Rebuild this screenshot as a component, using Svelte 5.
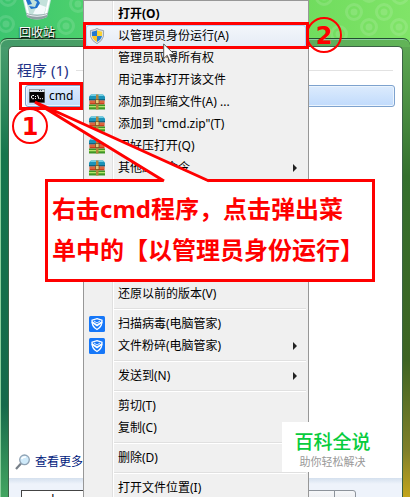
<script>
  const before = [
    { text: '打开(O)', bold: true },
    { text: '以管理员身份运行(A)', icon: 'shield', active: true },
    { text: '管理员取得所有权' },
    { text: '用记事本打开该文件' },
    { text: '添加到压缩文件(A) ...', icon: 'zip' },
    { text: '添加到 "cmd.zip"(T)', icon: 'zip' },
    { text: '用好压打开(Q)', icon: 'zip' },
    { text: '其他压缩命令', icon: 'zip', sub: true }
  ];
  const groups = [
    [{ text: '还原以前的版本(V)' }],
    [
      { text: '扫描病毒(电脑管家)', icon: 'guard' },
      { text: '文件粉碎(电脑管家)', icon: 'guard', sub: true }
    ],
    [{ text: '发送到(N)', sub: true }],
    [{ text: '剪切(T)' }, { text: '复制(C)' }],
    [{ text: '删除(D)' }],
    [{ text: '打开文件位置(I)' }]
  ];
  const rings = [
    [324, -3], [354, 12], [384, 12], [369, 27], [399, 27], [339, 34], [369, -6], [400, -4],
    [6, 24], [66, 26], [78, 4], [8, -2]
  ];
</script>

{#snippet icon(name)}
  {#if name === 'shield'}
    <svg width="16" height="16" viewBox="0 0 16 16">
      <path d="M8 .4 10.2 1.6 14.6 2.6 14.4 8.6Q13.2 13 8 15.7 2.8 13 1.6 8.6L1.4 2.6 5.8 1.6Z" fill="#dfe4e8" stroke="#8a949c" stroke-width=".8" />
      <path d="M8 2.2V8H3L2.8 3.8 6 3Z" fill="#2378d0" />
      <path d="M8 2.2 10 3 13.2 3.8 13 8H8Z" fill="#fbd234" />
      <path d="M3 8H8V14Q4 11.8 3 8Z" fill="#fbc523" />
      <path d="M8 8H13Q12 11.8 8 14Z" fill="#2a7fd6" />
    </svg>
  {:else if name === 'zip'}
    <svg width="16" height="16" viewBox="0 0 16 16">
      <path d="M2 .5H14L16 2.500V5.500H0V2.500Z" fill="#1c93b8" />
      <path d="M2 .5H14L15 2H1Z" fill="#6fcfe4" />
      <path d="M0 5H16V6.500H0Z" fill="#0f6480" />
      <path d="M.5 6.500H15.500V10.500H.5Z" fill="#c8401f" />
      <path d="M.5 7.500H15.500V8.500H.5Z" fill="#f58a5c" />
      <path d="M0 10.500H16V15.500H0Z" fill="#3f9626" />
      <path d="M0 12H16V13.300H0Z" fill="#b4e66c" />
      <path d="M7 .5H9.500V15.500H7Z" fill="#b4853c" />
      <path d="M6.500 5.500H10V9.500H6.500Z" fill="#e9c677" stroke="#6d4518" stroke-width=".7" />
    </svg>
  {:else if name === 'guard'}
    <svg width="16" height="16" viewBox="0 0 16 16">
      <rect width="16" height="16" rx="1.500" fill="#1677f8" />
      <path d="M8 2.600 13 4.200Q13.500 10.500 8 13.500 2.500 10.500 3 4.200Z" fill="none" stroke="#fff" stroke-width="1.300" />
      <path d="M3 6 8 9.500 13 6" fill="none" stroke="#fff" stroke-width="1.800" />
      <path d="M5 5 8 7 11 5" fill="none" stroke="#fff" stroke-width=".9" />
    </svg>
  {/if}
{/snippet}

{#snippet entry(item)}
  <button class="item" class:bold={item.bold} class:active={item.active} role="menuitem">
    <span class="slot">{@render icon(item.icon)}</span>
    <span class="label">{item.text}</span>
    {#if item.sub}
      <svg class="arrow" width="4" height="8" viewBox="0 0 4 8"><path d="M0 0 4 4 0 8Z" fill="#222" /></svg>
    {/if}
  </button>
{/snippet}

<div class="desktop">
  <svg class="wallpaper" width="100%" height="60">
    {#each rings as [x, y]}
      <circle cx={x} cy={y} r="7.500" fill="none" stroke="#fff" stroke-opacity=".12" stroke-width="3" />
      <circle cx={x} cy={y} r="3.500" fill="#fff" fill-opacity=".13" />
    {/each}
  </svg>

  <div class="bin">
    <svg width="30" height="20" viewBox="0 0 30 20">
      <path d="M1 0H29L25 17Q15 22 5 17Z" fill="#d5e4ea" fill-opacity=".88" />
      <path d="M3 0 7 17M27 0 23 17" stroke="#fff" stroke-width="2" />
      <path d="M11 14 16 4 24 7 22 14Z" fill="#f4fafc" />
      <path d="M4.200 13Q15 17 26 13L25 17Q15 22 5 17Z" fill="#8fa0a4" />
      <path d="M5 14.500Q15 18 25 14.500" stroke="#eef5f7" fill="none" />
      <path d="M4 0H8L10 4 6 5ZM7 6 13 7 15 2 12 0H16L18 3 15 8 9 9Z" fill="#2372cc" />
    </svg>
    <span>回收站</span>
  </div>

  <main class="start">
    <div class="panel">
      <section class="results">
        <h2>程序 (1)<i></i></h2>
        <button class="result">
          <svg width="16" height="14" viewBox="0 0 16 14">
            <rect width="16" height="14" fill="#9aa1a6" />
            <rect x="1" y="1" width="14" height="2" fill="#dce4ea" />
            <path d="M10 1.500h1M12 1.500h1" stroke="#345" />
            <rect x=".5" y="3" width="15" height="10.500" fill="#050505" />
            <path d="M5 6.500H3.500Q2.500 6.500 2.500 8T3.500 9.700H5M6.500 7v1M6.500 9v1M8.500 6 10 10M11 9.700h1M13 9.700h1" fill="none" stroke="#fff" />
          </svg>
          cmd
        </button>
      </section>
      <a class="more" href="#more">
        <svg width="16" height="16" viewBox="0 0 16 16">
          <path d="M1 15 6 9.500" stroke="#777f88" stroke-width="2.200" />
          <circle cx="9.500" cy="5.800" r="4.800" fill="#cfeafa" stroke="#8fa3b5" stroke-width="1.300" />
          <path d="M6.500 5Q8 2.500 11 3" fill="none" stroke="#fff" stroke-width="1.500" />
        </svg>
        查看更多结果
      </a>
      <footer>
        <input aria-label="搜索程序和文件" value="cmd" />
        <div class="power"><button aria-label="关机"></button><button aria-label="关机选项"></button></div>
      </footer>
    </div>
  </main>

  <div class="menu" role="menu">
    {#each before as item}{@render entry(item)}{/each}
    <div class="covered"></div>
    {#each groups as group, i}
      {#if i > 0}<hr />{/if}
      {#each group as item}{@render entry(item)}{/each}
    {/each}
  </div>

  <div class="mark mark-run"></div>
  <div class="mark mark-cmd"></div>
  <div class="num one">1</div>
  <div class="num two">2</div>

  <svg class="cursor" width="14" height="20" viewBox="0 0 14 20">
    <path d="M.7 1V15.500L4.200 12.300 6.700 18 9.200 17 6.700 11.500H11.500Z" fill="#fff" stroke="#555" />
  </svg>

  <p class="callout">右击cmd程序，点击弹出菜<br />单中的【以管理员身份运行】</p>
  <svg class="tail" width="190" height="90" viewBox="0 0 190 90">
    <path d="M131 83 2 3 176 83Z" fill="#fff" />
    <path d="M131 82 2 3 176 82" fill="none" stroke="#f00" stroke-width="3" />
  </svg>

  <div class="brand"><strong>百科全说</strong><span>助你轻松解决</span></div>
</div>

<style>
  :global(body) { margin: 0; }
  .desktop {
    position: relative;
    height: 100vh;
    overflow: hidden;
    display: flex;
    flex-direction: column;
    background: linear-gradient(90deg, #3cc56f, #50d36c 25%, #70dc5e 75%, #80e468);
    font: 12px/22px "Noto Sans", "Noto Sans CJK SC", sans-serif;
    color: #000;
  }
  button, input { font: inherit; color: inherit; }
  svg { display: block; flex: none; }
  .wallpaper { position: absolute; inset: 0 0 auto; }
  .bin {
    position: relative;
    width: 74px;
    height: 38px;
    flex: none;
    display: flex;
    flex-direction: column;
    align-items: center;
    color: #fff;
    text-shadow: 0 1px 2px #000, 1px 1px 1px #000;
  }
  .bin span { position: relative; z-index: 1; margin-top: 2px; }
  .bin { z-index: 1; }
  .start {
    flex: 1;
    position: relative;
    display: flex;
    min-height: 0;
    padding: 7px 7px 0 8px;
    border-top: 1px solid #234c31;
    border-radius: 7px 7px 0 0;
    background:
      linear-gradient(90deg, #439a69, #62b457) top / 100% 8px no-repeat,
      linear-gradient(#4b9f70, #16764c 25%, #16694a 80%, #43a561) left / 50% 100% no-repeat,
      linear-gradient(#5eaa55, #34702e 30%, #3d6423 70%, #808029 90%, #c3a51c) right / 50% 100% no-repeat;
    box-shadow: inset 1px 1px 0 #8bcf9c;
  }
  .panel {
    flex: 1;
    display: flex;
    flex-direction: column;
    min-width: 0;
    background: #fff;
    border: 1px solid #3b6346;
    border-bottom: 0;
    border-radius: 5px 5px 0 0;
  }
  .results { flex: 1; padding: 12px 7px 0 8px; }
  h2 {
    display: flex;
    align-items: center;
    gap: 8px;
    margin: 0;
    color: #1e3287;
    font-size: 15px;
    line-height: 22px;
    font-weight: 400;
  }
  h2 i { flex: 1; height: 1px; margin-right: 2px; background: #e2e2e2; }
  .result {
    display: flex;
    align-items: center;
    gap: 4px;
    width: calc(100% - 8px);
    height: 22px;
    margin: 4px 0 0 8px;
    padding: 0 3px;
    border: 1px solid #7da2ce;
    border-radius: 3px;
    background: linear-gradient(#dcebfd, #c1dbfc);
    box-shadow: inset 0 0 0 1px #ebf4fd;
    line-height: 20px;
  }
  .more {
    display: flex;
    align-items: center;
    gap: 4px;
    padding: 0 6px 5px;
    color: #00207c;
    text-decoration: none;
    white-space: nowrap;
  }
  footer {
    display: flex;
    justify-content: space-between;
    height: 19px;
    overflow: hidden;
    padding: 12px 46px 0 12px;
    box-sizing: border-box;
    background: linear-gradient(#d4e0ee, #eef3fb 6px);
  }
  footer input {
    width: 200px;
    height: 18px;
    box-sizing: border-box;
    border: 1px solid #444;
    padding: 0 8px;
    background: #fff;
    outline: 0;
    line-height: 16px;
  }
  .power { display: flex; }
  .power button {
    width: 64px;
    height: 24px;
    border: 1px solid #8d939b;
    background: linear-gradient(#f6f7f9, #d8dce2);
    border-radius: 3px 0 0 0;
  }
  .power button + button { width: 22px; margin-left: -1px; border-radius: 0 3px 0 0; }
  .menu {
    position: absolute;
    z-index: 1;
    left: 83px;
    top: 0;
    width: 226px;
    box-sizing: border-box;
    border: 1px solid #979797;
    padding: 2px;
    background: linear-gradient(90deg, transparent 28px, #e0e0e0 28px 29px, #fff 29px 30px, transparent 30px) #f0f0f0;
  }
  .item {
    display: flex;
    align-items: center;
    width: 100%;
    height: 22px;
    padding: 0 9px 0 3px;
    border: 0;
    background: none;
    text-align: left;
    white-space: nowrap;
  }
  .item.active {
    border-radius: 3px;
    background: linear-gradient(#f3f6fb, #e5ebf5);
    box-shadow: inset 0 0 0 1px #aecff7;
  }
  .bold { font-weight: 700; }
  .slot { width: 29px; flex: none; }
  .label { flex: 1; }
  .covered { height: 104px; }
  hr {
    height: 1px;
    margin: 3px 0 3px 28px;
    border: 0;
    border-top: 1px solid #e0e0e0;
    background: #fff;
  }
  .mark, .num, .cursor, .callout, .tail, .brand { position: absolute; z-index: 2; }
  .mark { box-sizing: border-box; border: 3px solid #f00; }
  .mark-run { left: 83px; top: 22px; width: 226px; height: 27px; }
  .mark-cmd { left: 19px; top: 82px; width: 64px; height: 28px; }
  .num {
    width: 36px;
    height: 36px;
    box-sizing: border-box;
    border: 2px solid #f00;
    border-radius: 50%;
    color: #f00;
    font: 700 24px/34px "DejaVu Sans", sans-serif;
    text-align: center;
  }
  .one { left: 12px; top: 108px; }
  .two { left: 306px; top: 17px; }
  .cursor { left: 163px; top: 43px; }
  .callout {
    left: 45px;
    top: 179px;
    width: 330px;
    height: 103px;
    box-sizing: border-box;
    margin: 0;
    padding: 6px 4px;
    border: 3px solid #f00;
    background: #fff;
    color: #f00;
    font-size: 24px;
    font-weight: 700;
    line-height: 41px;
    white-space: nowrap;
  }
  .tail { left: 33px; top: 99px; }
  .brand {
    right: 35px;
    bottom: 25px;
    width: 93px;
    height: 50px;
    box-sizing: border-box;
    padding: 8px 0 0 8px;
    display: flex;
    flex-direction: column;
    align-items: center;
    background: #fff;
    color: #999;
    font-size: 11px;
    line-height: 16px;
  }
  .brand strong { color: #07cc3d; font-size: 19px; line-height: 24px; font-weight: 500; }
</style>
